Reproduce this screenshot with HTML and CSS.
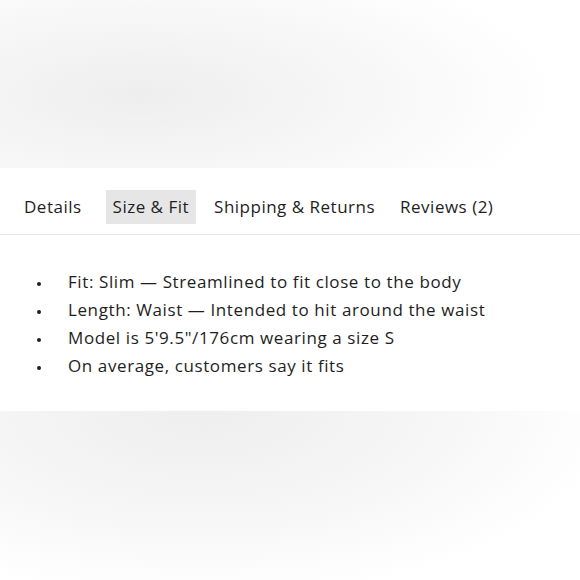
FILE: index.html
```html
<html>
<head>
    <meta name="viewport" content="width=device-width">
    <title>Size &amp; Fit</title>
    <link rel="stylesheet" href="styles.css">
</head>
<body>

<div class="shade-top"></div>

<div class="panel">
    <div class="tabs">
        <div class="tab first">Details</div>
        <div class="tab active">Size &amp; Fit</div>
        <div class="tab">Shipping &amp; Returns</div>
        <div class="tab">Reviews (2)</div>
    </div>

    <ul class="fit-list">
        <li>Fit: Slim — Streamlined to fit close to the body</li>
        <li>Length: Waist — Intended to hit around the waist</li>
        <li>Model is 5'9.5"/176cm wearing a size S</li>
        <li>On average, customers say it fits</li>
    </ul>
</div>

<div class="shade-bottom"></div>

</body>
</html>
```

FILE: styles.css
```css
body {
    margin: 0;
    padding: 0;
    overflow: hidden;
    background: #fff;
    font-family: "Open Sans", "Liberation Sans", sans-serif;
    color: #1e1e1e;
    letter-spacing: 0.6px;
}

.shade-top {
    height: 168px;
    background: radial-gradient(ellipse 420px 150px at 140px 95px, #eeeeee 0%, #f7f7f7 55%, #fff 100%);
}

.panel {
    height: 243px;
    background: #fff;
}

.tabs {
    display: flex;
    gap: 11px;
    padding: 22px 0 0 17px;
    height: 44px;
    border-bottom: 1px solid #e6e6e6;
}

.tab {
    height: 34px;
    line-height: 34px;
    padding: 0 7px;
    font-size: 17px;
    letter-spacing: 0.5px;
}

.tab.first {
    margin-right: 6px;
}

.tab.active {
    background: #e6e6e6;
}

.fit-list {
    margin: 0;
    padding: 33px 0 0 37px;
    list-style: none;
    font-size: 17px;
    line-height: 28px;
}

.fit-list li {
    display: flex;
}

.fit-list li::before {
    content: "";
    flex: 0 0 4px;
    height: 4px;
    margin: 14px 27px 0 0;
    border-radius: 50%;
    background: #1e1e1e;
}

.shade-bottom {
    height: 169px;
    background: radial-gradient(ellipse 420px 190px at 200px 0, #eeeeee 0%, #f6f6f6 55%, #fff 100%);
}
```
